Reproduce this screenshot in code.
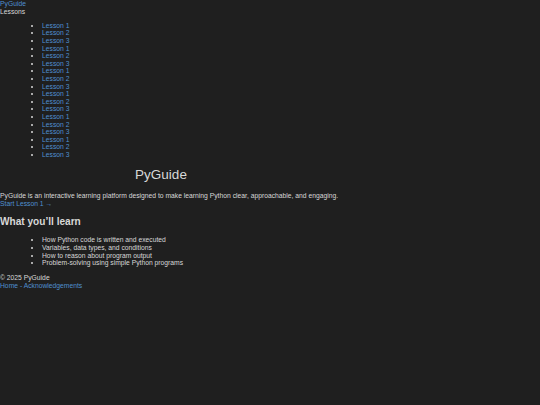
import React from "react";

const lessons = Array.from({ length: 18 }, (_, i) => `Lesson ${(i % 3) + 1}`);
const learn = [
  "How Python code is written and executed",
  "Variables, data types, and conditions",
  "How to reason about program output",
  "Problem-solving using simple Python programs",
];

export default function App() {
  return (
    <div
      className="min-h-[405px] w-full bg-[#1f1f1f] text-[#d8d8d8] text-[6.75px] leading-[7.6px]"
      style={{ fontFamily: '"Liberation Sans", Arial, sans-serif' }}
    >
      <header>
        <nav>
          <a href="#" className="block text-[#4f8fcf]">PyGuide</a>
          <div>Lessons</div>
          <ul className="my-[6.6px] list-disc pl-[42px]">
            {lessons.map((l, i) => (
              <li key={i}>
                <a href="#" className="text-[#4f8fcf]">{l}</a>
              </li>
            ))}
          </ul>
        </nav>
      </header>
      <main>
        <h1 className="w-[322px] text-center text-[13.5px] leading-[15.5px] my-[9px] font-normal">PyGuide</h1>
        <p className="my-[9px]">
          PyGuide is an interactive learning platform designed to make learning Python clear, approachable, and engaging.
          <br />
          <a href="#" className="text-[#4f8fcf]">Start Lesson 1 →</a>
        </p>
        <h2 className="text-[10.1px] leading-[11.6px] font-bold my-[8.6px]">What you’ll learn</h2>
        <ul className="my-[7.2px] list-disc pl-[42px]">
          {learn.map((l) => (
            <li key={l}>{l}</li>
          ))}
        </ul>
      </main>
      <footer className="my-[7.2px]">
        <div>© 2025 PyGuide</div>
        <div>
          <a href="#" className="text-[#4f8fcf]">Home</a>
          <span className="text-[#4f8fcf]"> - </span>
          <a href="#" className="text-[#4f8fcf]">Acknowledgements</a>
        </div>
      </footer>
    </div>
  );
}
